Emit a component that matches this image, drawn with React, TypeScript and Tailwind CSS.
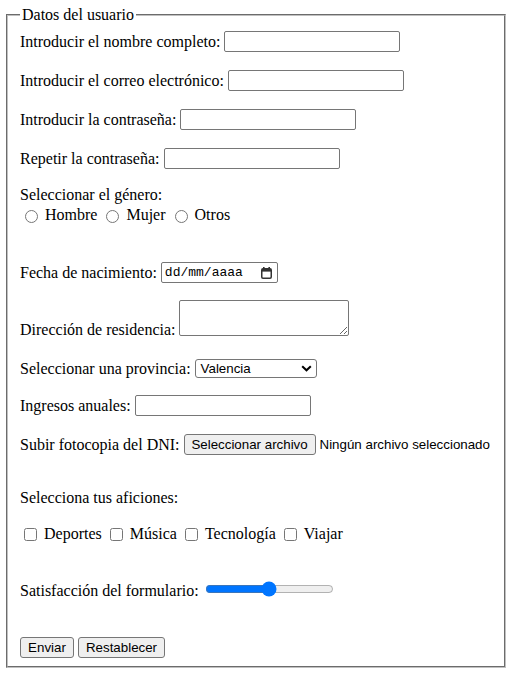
import React from 'react';

const ctrl = "font-['Liberation_Sans',Arial,sans-serif] text-[13.333px] text-black";

function TextBox({ w = 176 }: { w?: number }) {
  return (
    <input
      type="text"
      style={{ width: w }}
      className={`h-[21px] ml-[4px] border border-[#767676] rounded-[2px] bg-white px-[2px] ${ctrl}`}
    />
  );
}

function Radio({ label, first }: { label: string; first?: boolean }) {
  return (
    <>
      <input
        type="radio"
        name="genero"
        className={`w-[13px] h-[13px] mt-[2px] mr-[7px] ${first ? 'ml-[5px]' : 'ml-[9px]'}`}
      />
      <span>{label}</span>
    </>
  );
}

function Check({ label, first }: { label: string; first?: boolean }) {
  return (
    <>
      <input
        type="checkbox"
        className={`w-[13px] h-[13px] mr-[7px] ${first ? 'ml-[4px]' : 'ml-[8px]'}`}
      />
      <span>{label}</span>
    </>
  );
}

function CalendarIcon() {
  return (
    <svg width="11" height="12" viewBox="0 0 11 12" className="shrink-0">
      <rect x="2" y="0" width="1.6" height="3" fill="#333" />
      <rect x="7.4" y="0" width="1.6" height="3" fill="#333" />
      <rect x="0.75" y="1.75" width="9.5" height="9.5" rx="1.2" fill="none" stroke="#333" strokeWidth="1.5" />
      <rect x="1" y="2" width="9" height="2.6" fill="#333" />
    </svg>
  );
}

export default function App() {
  return (
    <div className="w-[510px] h-[674px] bg-white text-black text-[16px] leading-[18px] font-['Liberation_Serif','Times_New_Roman',serif]">
      <form onSubmit={(e) => e.preventDefault()}>
        <fieldset className="ml-[6px] mt-[6px] w-[500px] border-2 [border-style:groove] border-[#c0c0c0] pl-[12px] pr-[12px] pb-[8px]">
          <legend className="px-[2px] leading-[18px]">Datos del usuario</legend>

          <div className="flex items-center h-[21px] mt-[7px]">
            <span>Introducir el nombre completo:</span>
            <TextBox />
          </div>

          <div className="flex items-center h-[21px] mt-[18px]">
            <span>Introducir el correo electrónico:</span>
            <TextBox />
          </div>

          <div className="flex items-center h-[21px] mt-[18px]">
            <span>Introducir la contraseña:</span>
            <TextBox />
          </div>

          <div className="flex items-center h-[21px] mt-[18px]">
            <span>Repetir la contraseña:</span>
            <TextBox />
          </div>

          <div className="h-[18px] mt-[17px]">Seleccionar el género:</div>
          <div className="flex items-center h-[18px] mt-[2px]">
            <Radio label="Hombre" first />
            <Radio label="Mujer" />
            <Radio label="Otros" />
          </div>

          <div className="flex items-center h-[21px] mt-[38px]">
            <span>Fecha de nacimiento:</span>
            <div className={`ml-[4px] w-[117px] h-[21px] border border-[#767676] rounded-[2px] flex items-center pl-[3px] pr-[5px] justify-between`}>
              <span className="font-['Liberation_Mono','Courier_New',monospace] text-[13px] leading-[15px]">dd/mm/aaaa</span>
              <CalendarIcon />
            </div>
          </div>

          <div className="flex items-end h-[36px] mt-[17px]">
            <span className="-mb-[3px]">Dirección de residencia:</span>
            <textarea className={`ml-[4px] w-[170px] h-[36px] border border-[#767676] rounded-[2px] bg-white p-[2px] resize ${ctrl}`} />
          </div>

          <div className="flex items-center h-[19px] mt-[23px]">
            <span>Seleccionar una provincia:</span>
            <div className={`ml-[4px] w-[122px] h-[19px] border border-[#767676] rounded-[3px] flex items-center justify-between pl-[5px] pr-[4px] ${ctrl}`}>
              <span className="leading-[15px]">Valencia</span>
              <svg width="11" height="7" viewBox="0 0 11 7">
                <polyline points="1.2,1.2 5.5,5.3 9.8,1.2" fill="none" stroke="#000" strokeWidth="2" />
              </svg>
            </div>
          </div>

          <div className="flex items-center h-[21px] mt-[17px]">
            <span>Ingresos anuales:</span>
            <TextBox />
          </div>

          <div className="flex items-center h-[21px] mt-[18px]">
            <span>Subir fotocopia del DNI:</span>
            <button type="button" className={`ml-[4px] w-[132px] h-[21px] bg-[#efefef] border border-[#767676] rounded-[3px] ${ctrl}`}>
              Seleccionar archivo
            </button>
            <span className={`ml-[4px] ${ctrl}`}>Ningún archivo seleccionado</span>
          </div>

          <div className="h-[18px] mt-[34px]">Selecciona tus aficiones:</div>

          <div className="flex items-center h-[18px] mt-[18px]">
            <Check label="Deportes" first />
            <Check label="Música" />
            <Check label="Tecnología" />
            <Check label="Viajar" />
          </div>

          <div className="flex items-start h-[20px] mt-[38px]">
            <span className="mt-[1px]">Satisfacción del formulario:</span>
            <input type="range" min={0} max={100} defaultValue={50} className="ml-[6px] w-[129px] h-[16px]" />
          </div>

          <div className="flex items-center h-[21px] mt-[36px] gap-[4px]">
            <button type="submit" className={`w-[54px] h-[21px] bg-[#efefef] border border-[#767676] rounded-[3px] ${ctrl}`}>
              Enviar
            </button>
            <button type="reset" className={`w-[87px] h-[21px] bg-[#efefef] border border-[#767676] rounded-[3px] ${ctrl}`}>
              Restablecer
            </button>
          </div>
        </fieldset>
      </form>
    </div>
  );
}
